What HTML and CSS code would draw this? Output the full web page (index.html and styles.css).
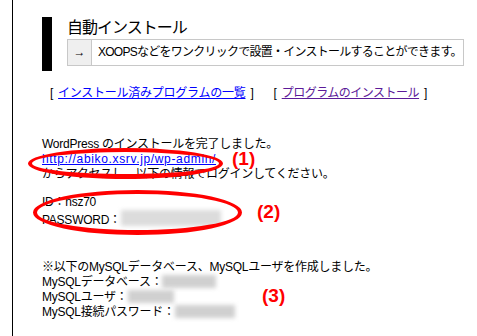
FILE: index.html
```html
<!DOCTYPE html>
<html lang="ja">
<head>
    <meta charset="UTF-8">
    <meta name="viewport" content="width=device-width, initial-scale=1.0">
    <title>自動インストール</title>
    <link rel="stylesheet" href="styles.css">
</head>
<body>
    <div class="page">
        <div class="section-head">
            <h1 class="title">自動インストール</h1>
            <div class="lead">
                <span class="lead-arrow">→</span>
                <span class="lead-text">XOOPSなどをワンクリックで設置・インストールすることができます。</span>
            </div>
        </div>

        <div class="links">
            <span class="bracket">[</span>
            <a href="#" class="link">インストール済みプログラムの一覧</a>
            <span class="bracket">]</span>
            <span class="links-gap"></span>
            <span class="bracket">[</span>
            <a href="#" class="link visited">プログラムのインストール</a>
            <span class="bracket">]</span>
        </div>

        <div class="result">
            <p class="block">
                WordPress のインストールを完了しました。<br>
                <a href="#" class="link url">http://abiko.xsrv.jp/wp-admin/</a><br>
                からアクセスし、以下の情報でログインしてください。
            </p>
            <p class="block account">
                ID：nsz70<br>
                PASSWORD：<span class="masked masked-pass"></span>
            </p>
            <p class="block mysql">
                ※以下のMySQLデータベース、MySQLユーザを作成しました。<br>
                MySQLデータベース：<span class="masked masked-db"></span><br>
                MySQLユーザ：<span class="masked masked-user"></span><br>
                MySQL接続パスワード：<span class="masked masked-dbpass"></span>
            </p>

            <!-- 注釈 -->
            <div class="mark mark-1"></div>
            <div class="mark mark-2"></div>
            <span class="note note-1">(1)</span>
            <span class="note note-2">(2)</span>
            <span class="note note-3">(3)</span>
        </div>
    </div>
</body>
</html>
```

FILE: styles.css
```css
body {
    margin: 0;
    background: #fff;
    color: #000;
    font-family: "Liberation Sans", "Noto Sans CJK JP", sans-serif;
    font-size: 12px;
}

.page {
    margin-left: 12px;
    border-left: 1px solid #000;
    min-height: 336px;
    padding: 17px 0 0 29px;
    box-sizing: border-box;
}

.section-head {
    border-left: 10px solid #000;
    padding-left: 15px;
    height: 54px;
    box-sizing: border-box;
}

.title {
    margin: 0;
    font-size: 16px;
    font-weight: normal;
    line-height: 22px;
    letter-spacing: -1px;
}

.lead {
    display: flex;
    width: 397px;
    height: 27px;
    border: 1px solid #c8c8c8;
    box-sizing: border-box;
    line-height: 25px;
    white-space: nowrap;
}

.lead-arrow {
    width: 23px;
    background: #efefef;
    border-right: 1px solid #c8c8c8;
    text-align: center;
}

.lead-text {
    padding-left: 6px;
    letter-spacing: -0.75px;
}

.links {
    display: flex;
    align-items: baseline;
    margin-top: 14px;
    padding-left: 8px;
    line-height: 16px;
    letter-spacing: -0.25px;
    white-space: nowrap;
}

.bracket {
    padding: 0 5px;
}

.bracket:first-child {
    padding-left: 0;
}

.links-gap {
    width: 10px;
}

.link {
    color: #0000ff;
}

.link.visited {
    color: #5c1a99;
    letter-spacing: -0.5px;
}

.url {
    letter-spacing: 0.65px;
}

.result {
    position: relative;
    margin-top: 36px;
}

.block {
    margin: 0;
    line-height: 15px;
    letter-spacing: -0.25px;
}

.account {
    margin-top: 13px;
}

.mysql {
    margin-top: 32px;
}

.masked {
    display: inline-block;
    height: 13px;
    vertical-align: -2px;
    background: #d0d0d0;
    filter: blur(2px);
}

.masked-pass {
    width: 100px;
    height: 16px;
    background: #dcdcdc;
}

.masked-db {
    width: 54px;
}

.masked-user {
    width: 46px;
}

.masked-dbpass {
    width: 60px;
}

.mark {
    position: absolute;
    border: 4px solid #ff0000;
    border-radius: 50%;
    box-sizing: border-box;
}

.mark-1 {
    left: -14px;
    top: 11px;
    width: 195px;
    height: 31px;
    border-bottom-width: 5px;
}

.mark-2 {
    left: -9px;
    top: 53px;
    width: 209px;
    height: 45px;
    border-bottom-width: 5px;
}

.note {
    position: absolute;
    color: #ff0000;
    font-weight: bold;
    font-size: 19px;
    line-height: 17px;
}

.note-1 {
    left: 190px;
    top: 13px;
}

.note-2 {
    left: 215px;
    top: 66px;
}

.note-3 {
    left: 220px;
    top: 150px;
}
```
